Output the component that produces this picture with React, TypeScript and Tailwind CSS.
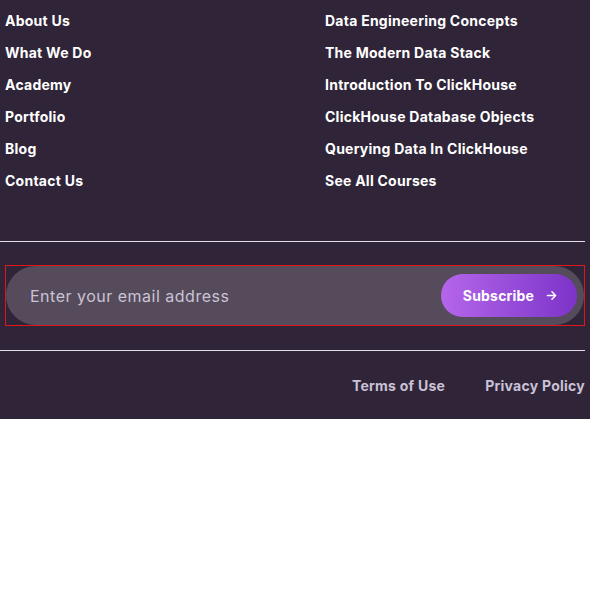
import React from 'react'

const company = ['About Us', 'What We Do', 'Academy', 'Portfolio', 'Blog', 'Contact Us']
const courses = [
  'Data Engineering Concepts',
  'The Modern Data Stack',
  'Introduction To ClickHouse',
  'ClickHouse Database Objects',
  'Querying Data In ClickHouse',
  'See All Courses',
]

const font = { fontFamily: 'Inter, "Noto Sans", sans-serif' }

export default function App() {
  return (
    <div className="w-full min-h-screen bg-white" style={font}>
      <footer className="bg-[#2f2438] w-full pb-[23px]">
        <div className="w-[585px]">
          {/* Link columns */}
          <div className="grid grid-cols-[320px_1fr] pl-[5px] pt-[4px]">
            <ul className="flex flex-col">
              {company.map((l) => (
                <li key={l} className="h-8 flex items-center">
                  <a href="#" className="text-white text-[14px] font-bold tracking-[0.25px]">{l}</a>
                </li>
              ))}
            </ul>
            <ul className="flex flex-col">
              {courses.map((l) => (
                <li key={l} className="h-8 flex items-center">
                  <a href="#" className="text-white text-[14px] font-bold tracking-[0.25px]">{l}</a>
                </li>
              ))}
            </ul>
          </div>

          <div className="h-px bg-[#e4dfe8] mt-[45px]" />

          {/* Newsletter */}
          <form className="ml-[5px] mt-[23px] border border-[#e0161b] h-[61px]" onSubmit={(e) => e.preventDefault()}>
            <div className="h-full rounded-full bg-[#554b5b] flex items-center pl-[24px] pr-[7px]">
              <input
                type="email"
                placeholder="Enter your email address"
                className="flex-1 bg-transparent outline-none text-[16px] tracking-[0.5px] text-[#d0c8da] placeholder:text-[#cbc3d6]"
              />
              <button
                type="submit"
                className="h-[43px] w-[136px] rounded-full bg-gradient-to-r from-[#b565ea] to-[#7d33c8] text-white text-[14px] font-bold tracking-[0.2px] flex items-center justify-center gap-[12px] pl-[2px]"
              >
                Subscribe
                <svg width="11" height="11" viewBox="0 0 12 12" fill="none" stroke="currentColor" strokeWidth="1.6" strokeLinecap="round" strokeLinejoin="round">
                  <path d="M1.5 6h9M6.5 2l4 4-4 4" />
                </svg>
              </button>
            </div>
          </form>

          <div className="h-px bg-[#e4dfe8] mt-[24px]" />

          {/* Legal links */}
          <div className="flex justify-end gap-[40px] pt-[25px] h-[45px]">
            <a href="#" className="text-[#c9c2d6] text-[14px] font-bold tracking-[0.25px] leading-5">Terms of Use</a>
            <a href="#" className="text-[#c9c2d6] text-[14px] font-bold tracking-[0.25px] leading-5">Privacy Policy</a>
          </div>
        </div>
      </footer>
    </div>
  )
}
